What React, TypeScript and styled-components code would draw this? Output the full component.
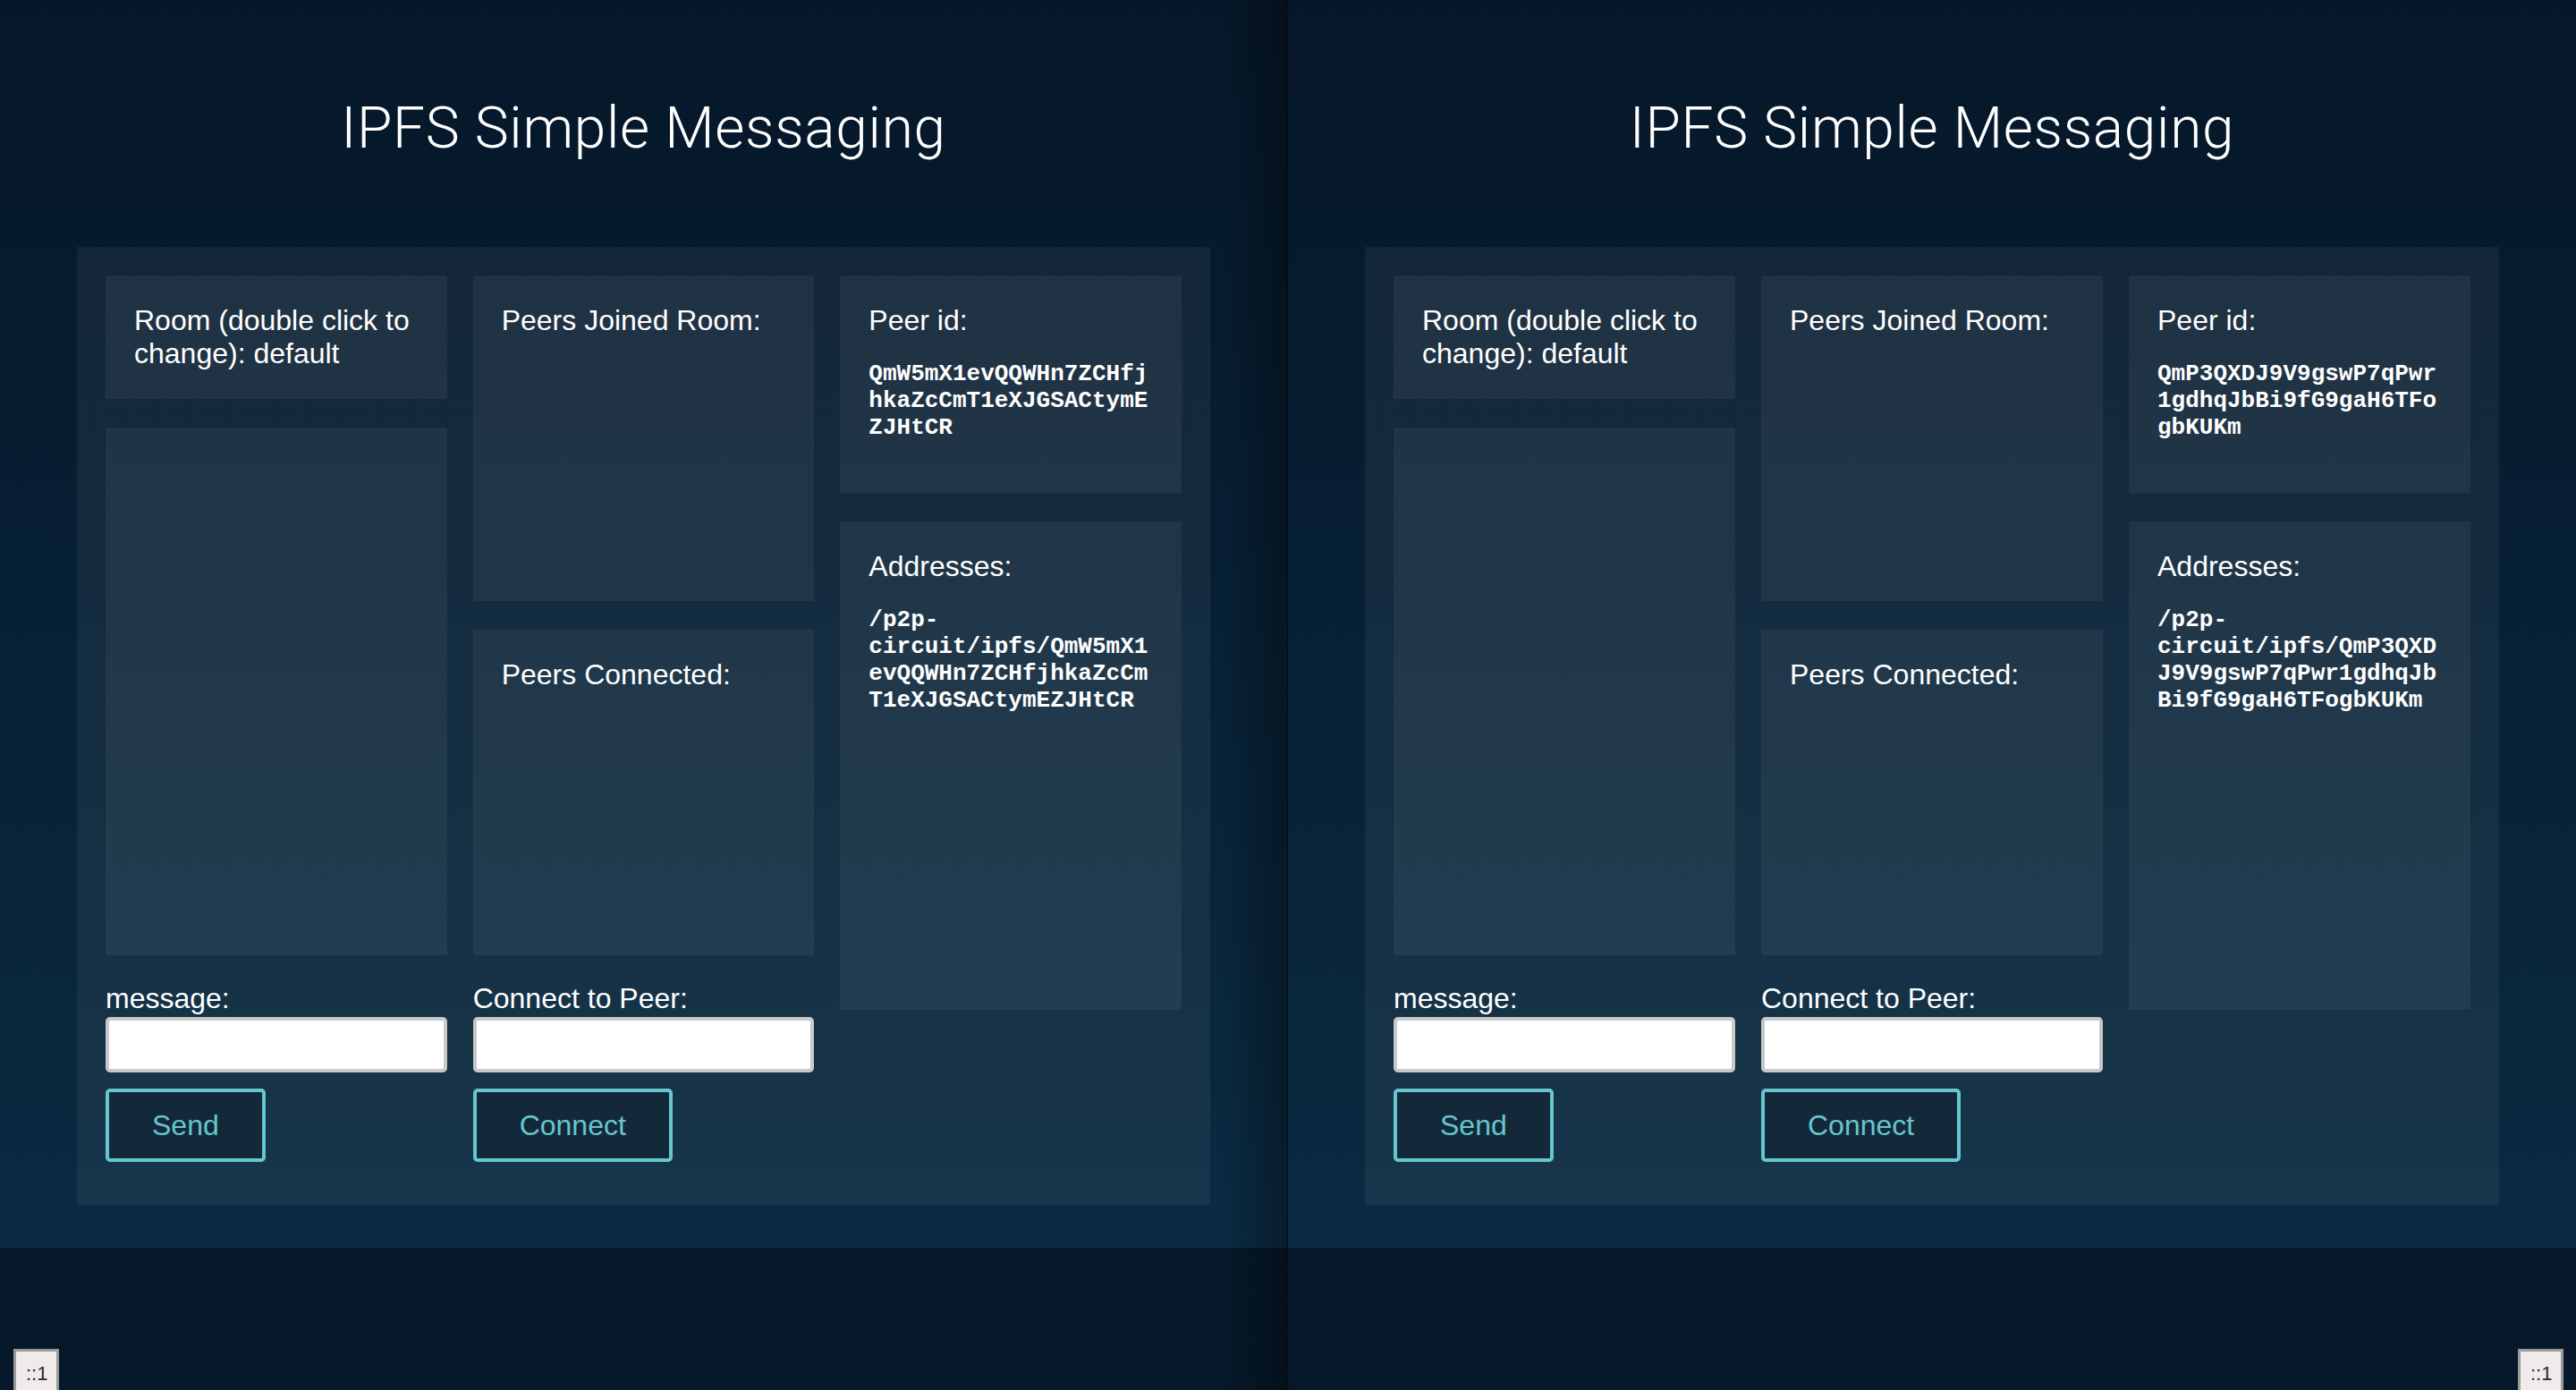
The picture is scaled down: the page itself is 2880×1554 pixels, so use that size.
import React from "react";
import styled, { createGlobalStyle } from "styled-components";

const Global = createGlobalStyle`
  html, body { margin: 0; padding: 0; background: #061829; }
  body { font-family: "Liberation Sans", Arial, sans-serif; color: #fff; }
  * { box-sizing: border-box; }
`;

const Screen = styled.div`
  display: grid;
  grid-template-columns: 1440px 1440px;
  width: 2880px;
  height: 1554px;
  overflow: hidden;
`;

const Pane = styled.div<{ $shaded?: boolean }>`
  position: relative;
  display: flex;
  flex-direction: column;
  background: #061829;
  ${(p) => (p.$shaded ? "border-right: 1px solid #030b14;" : "")}
  &::after {
    content: "";
    display: ${(p) => (p.$shaded ? "block" : "none")};
    position: absolute;
    top: 0;
    right: 0;
    bottom: 0;
    width: 70px;
    pointer-events: none;
    background: linear-gradient(to right, rgba(0, 0, 0, 0), rgba(0, 0, 0, 0.32));
  }
`;

const AppArea = styled.main`
  display: flex;
  flex-direction: column;
  padding: 0 86px 48px;
  background: linear-gradient(to bottom, #061729 0%, #071f33 45%, #0a2b42 100%);
`;

const Title = styled.h1`
  margin: 0;
  padding: 108px 0 96px;
  text-align: center;
  font-family: Roboto, "Liberation Sans", sans-serif;
  font-weight: 300;
  font-size: 64px;
  letter-spacing: 0.7px;
  line-height: 72px;
  color: #fff;
`;

const Board = styled.section`
  display: grid;
  grid-template-columns: repeat(3, 1fr);
  column-gap: 29px;
  padding: 32px 32px 48px;
  background: rgba(255, 255, 255, 0.055);
`;

const Column = styled.div`
  display: flex;
  flex-direction: column;
  min-width: 0;
`;

const Stack = styled.div<{ $fixed?: boolean }>`
  display: flex;
  flex-direction: column;
  gap: 32px;
  ${(p) => (p.$fixed ? "height: 760px;" : "")}
`;

const Card = styled.div<{ $grow?: boolean; $height?: number }>`
  padding: 32px;
  background: rgba(255, 255, 255, 0.055);
  font-size: 32px;
  line-height: 37px;
  ${(p) => (p.$grow ? "flex: 1 1 0;" : "flex: none;")}
  ${(p) => (p.$height ? `height: ${p.$height}px;` : "")}
`;

const Label = styled.div`
  font-size: 32px;
  line-height: 37px;
  color: #fff;
`;

const Mono = styled.p`
  margin: 26px 0;
  font-family: "Liberation Mono", "Courier New", monospace;
  font-weight: bold;
  font-size: 26px;
  line-height: 30px;
  overflow-wrap: break-word;
  word-break: normal;
`;

const Form = styled.div`
  display: flex;
  flex-direction: column;
  align-items: flex-start;
  margin-top: 30px;
`;

const FieldLabel = styled.label`
  font-size: 32px;
  line-height: 37px;
  margin-bottom: 2px;
`;

const Input = styled.input`
  width: 100%;
  height: 62px;
  border: 4px solid #c9c9c9;
  border-radius: 5px;
  background: #fff;
  font-size: 28px;
  padding: 0 10px;
  outline: none;
`;

const Button = styled.button`
  margin-top: 18px;
  height: 82px;
  padding: 0 48px;
  border: 4px solid #66c6ce;
  border-radius: 5px;
  background: #13293a;
  color: #66c6ce;
  font-family: "Liberation Sans", Arial, sans-serif;
  font-size: 32px;
  cursor: pointer;
`;

const Footer = styled.div`
  flex: 1;
  background: #061829;
`;

const StatusBubble = styled.div<{ $side: "left" | "right" }>`
  position: absolute;
  bottom: -6px;
  ${(p) => (p.$side === "left" ? "left: 15px;" : "right: 14px;")}
  width: 51px;
  height: 52px;
  padding: 12px 0 0 11px;
  background: #efebeb;
  border: 3px solid #9b9b9b;
  border-bottom: none;
  font-family: "Liberation Sans", Arial, sans-serif;
  font-size: 22px;
  color: #2a2a2a;
`;

type PeerProps = { peerId: string; side: "left" | "right"; shaded?: boolean };

function Messenger({ peerId, side, shaded }: PeerProps) {
  return (
    <Pane $shaded={shaded}>
      <AppArea>
        <Title>IPFS Simple Messaging</Title>
        <Board>
          <Column>
            <Stack $fixed>
              <Card>Room (double click to change): default</Card>
              <Card $grow />
            </Stack>
            <Form>
              <FieldLabel>message:</FieldLabel>
              <Input type="text" />
              <Button>Send</Button>
            </Form>
          </Column>
          <Column>
            <Stack $fixed>
              <Card $grow>Peers Joined Room:</Card>
              <Card $grow>Peers Connected:</Card>
            </Stack>
            <Form>
              <FieldLabel>Connect to Peer:</FieldLabel>
              <Input type="text" />
              <Button>Connect</Button>
            </Form>
          </Column>
          <Column>
            <Stack>
              <Card>
                <Label>Peer id:</Label>
                <Mono>{peerId}</Mono>
              </Card>
              <Card $height={546}>
                <Label>Addresses:</Label>
                <Mono>{`/p2p-circuit/ipfs/${peerId}`}</Mono>
              </Card>
            </Stack>
          </Column>
        </Board>
      </AppArea>
      <Footer />
      <StatusBubble $side={side}>::1</StatusBubble>
    </Pane>
  );
}

export default function App() {
  return (
    <>
      <Global />
      <Screen>
        <Messenger peerId="QmW5mX1evQQWHn7ZCHfjhkaZcCmT1eXJGSACtymEZJHtCR" side="left" shaded />
        <Messenger peerId="QmP3QXDJ9V9gswP7qPwr1gdhqJbBi9fG9gaH6TFogbKUKm" side="right" />
      </Screen>
    </>
  );
}
